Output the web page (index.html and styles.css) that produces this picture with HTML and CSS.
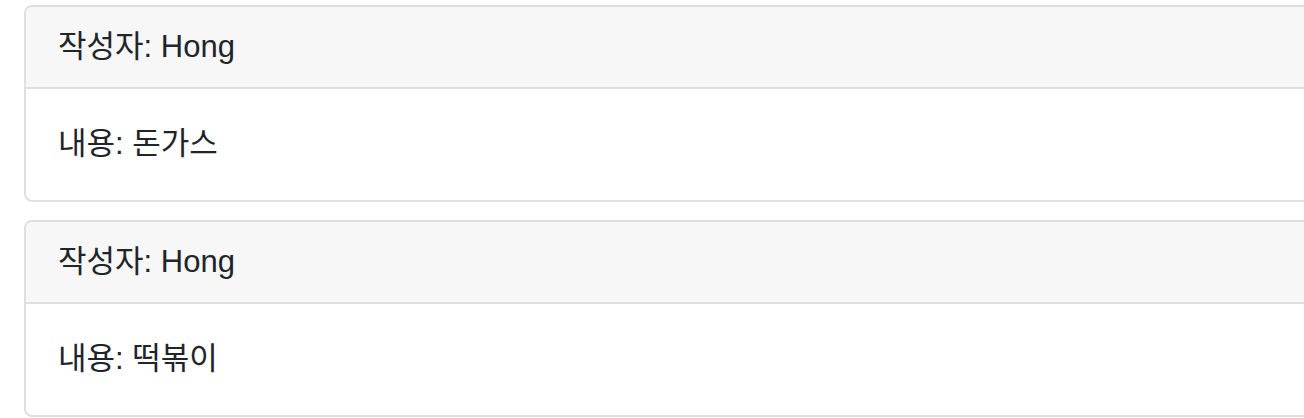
FILE: index.html
```html
<!DOCTYPE html>
<html lang="ko">
<head>
<meta charset="utf-8">
<title>Posts</title>
<link rel="stylesheet" href="styles.css">
</head>
<body>
<main class="list">
  <section class="card">
    <div class="card-header">작성자: Hong</div>
    <div class="card-body">내용: 돈가스</div>
  </section>
  <section class="card">
    <div class="card-header">작성자: Hong</div>
    <div class="card-body">내용: 떡볶이</div>
  </section>
</main>
</body>
</html>
```
FILE: styles.css
```css
html, body {
  margin: 0;
  padding: 0;
  overflow: hidden;
  background: #fff;
}
body {
  font-family: "Liberation Sans", "Noto Sans CJK KR", Arial, sans-serif;
  font-size: 31px;
  line-height: 40px;
  color: #212529;
}
.list {
  display: flex;
  flex-direction: column;
  gap: 18px;
  padding: 5px 0 0 24px;
  width: 1330px;
}
.card {
  border: 2px solid #dfdfdf;
  border-radius: 8px;
  overflow: hidden;
}
.card-header {
  background: #f7f7f7;
  border-bottom: 2px solid #dfdfdf;
  padding: 20px 32px;
}
.card-body {
  padding: 35px 32px 36px;
}
```
